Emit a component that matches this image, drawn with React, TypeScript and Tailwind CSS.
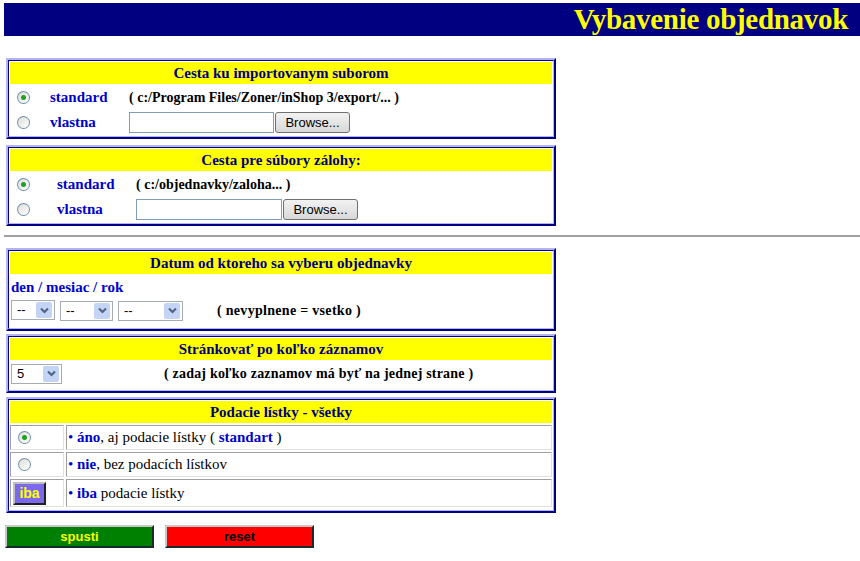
import React from "react";

const SANS = "font-['Liberation_Sans',Arial,sans-serif]";

function Radio({ checked = false }: { checked?: boolean }) {
  return (
    <span className="inline-flex h-[13px] w-[13px] items-center justify-center rounded-full border border-[#1c5180]/60 bg-gradient-to-br from-[#dcdcd7] to-white">
      {checked && <span className="h-[5px] w-[5px] rounded-full bg-[#21a121]" />}
    </span>
  );
}

function Browse() {
  return (
    <span className={`inline-flex h-[21px] w-[75px] items-center justify-center rounded-[3px] border border-[#707070] bg-gradient-to-b from-[#f2f2f2] to-[#d8d8d8] text-[13px] font-normal text-black ${SANS}`}>
      Browse...
    </span>
  );
}

function Select({ value, width }: { value: string; width: string }) {
  return (
    <span className={`inline-flex h-[20px] ${width} items-center justify-between border border-[#a5acb5] bg-white pl-[5px] pr-[2px] text-[13px] text-black ${SANS}`}>
      <span>{value}</span>
      <span className="flex h-[16px] w-[16px] items-center justify-center rounded-[2px] bg-[#c4d4f5]">
        <svg width="9" height="7" viewBox="0 0 9 7">
          <path d="M1 1.5 L4.5 5 L8 1.5" fill="none" stroke="#4d6185" strokeWidth="2" />
        </svg>
      </span>
    </span>
  );
}

function Box({ title, children }: { title: string; children: React.ReactNode }) {
  return (
    <div className="w-[550px] border-2 border-t-[#b4b4f0] border-l-[#b4b4f0] border-b-[#000080] border-r-[#000080]">
      <div className="border border-t-[#000080] border-l-[#000080] border-b-[#b4b4f0] border-r-[#b4b4f0] p-[1px]">
        <div className="flex h-[22px] items-center justify-center bg-[#ffff00] text-[15px] font-bold text-[#000080]">
          {title}
        </div>
        {children}
      </div>
    </div>
  );
}

function FileRow({ checked, label, children, labelW }: { checked?: boolean; label: string; children: React.ReactNode; labelW: string }) {
  return (
    <div className="flex h-[25px] items-center">
      <div className="flex w-[40px] pl-[7px]">
        <Radio checked={checked} />
      </div>
      <div className={`${labelW} text-[15px] font-bold text-[#0000cc]`}>{label}</div>
      <div className="flex items-center text-[14px] font-bold text-black">{children}</div>
    </div>
  );
}

function Cell({ children, className = "" }: { children: React.ReactNode; className?: string }) {
  return <div className={`flex items-center border border-[#a0a0a0] border-b-[#e0e0e0] border-r-[#e0e0e0] ${className}`}>{children}</div>;
}

export default function App() {
  return (
    <div className="min-h-screen w-full bg-white pl-[4px] pt-[3px] font-['Liberation_Serif','Times_New_Roman',serif]">
      <header className="flex h-[33px] items-center justify-end bg-[#000080] pr-[12px]">
        <h1 className="text-[29px] font-bold leading-none tracking-[-0.3px] text-[#ffff00]">Vybavenie objednavok</h1>
      </header>

      <div className="ml-[2px] mt-[22px] flex flex-col gap-[6px]">
        <Box title="Cesta ku importovanym suborom">
          <div className="pt-[1px]">
            <FileRow checked label="standard" labelW="w-[79px]">
              ( c:/Program Files/Zoner/inShop 3/export/... )
            </FileRow>
            <FileRow label="vlastna" labelW="w-[79px]">
              <span className="h-[21px] w-[145px] border border-[#7f9db9] bg-white" />
              <span className="ml-[1px]"><Browse /></span>
            </FileRow>
          </div>
        </Box>

        <Box title="Cesta pre súbory zálohy:">
          <div className="pt-[1px]">
            <FileRow checked label="standard" labelW="w-[86px] pl-[7px]">
              ( c:/objednavky/zaloha... )
            </FileRow>
            <FileRow label="vlastna" labelW="w-[86px] pl-[7px]">
              <span className="h-[21px] w-[146px] border border-[#7f9db9] bg-white" />
              <span className="ml-[1px]"><Browse /></span>
            </FileRow>
          </div>
        </Box>
      </div>

      <hr className="mt-[9px] border-0 border-t-2 border-t-[#a0a0a0]" />

      <div className="ml-[2px] mt-[11px] flex flex-col gap-[3px]">
        <Box title="Datum od ktoreho sa vyberu objednavky">
          <div className="px-[1px] pb-[5px] pt-[2px]">
            <div className="h-[22px] text-[15px] font-bold leading-[22px] text-[#0000cc]">den / mesiac / rok</div>
            <div className="flex items-center">
              <Select value="--" width="w-[44px]" />
              <span className="ml-[5px]"><Select value="--" width="w-[53px]" /></span>
              <span className="ml-[5px]"><Select value="--" width="w-[65px]" /></span>
              <span className="ml-[34px] text-[14px] font-bold tracking-[0.3px]">( nevyplnene = vsetko )</span>
            </div>
          </div>
        </Box>

        <Box title="Stránkovať po koľko záznamov">
          <div className="flex items-center px-[1px] pb-[5px] pt-[3px]">
            <Select value="5" width="w-[51px]" />
            <span className="ml-[102px] text-[14px] font-bold tracking-[0.2px]">( zadaj koľko zaznamov má byť na jednej strane )</span>
          </div>
        </Box>

        <div className="mt-[1px]">
          <Box title="Podacie lístky - všetky">
            <div className="flex flex-col gap-[2px] pb-[2px] pt-[2px] text-[15px]">
              {[
                { icon: <Radio checked />, text: <><b className="text-[#0000cc]">áno</b>, aj podacie lístky ( <b className="text-[#0000cc]">standart</b> )</>, h: "h-[25px]" },
                { icon: <Radio />, text: <><b className="text-[#0000cc]">nie</b>, bez podacích lístkov</>, h: "h-[25px]" },
                {
                  icon: (
                    <span className={`flex h-[23px] w-[33px] items-center justify-center border-2 border-t-[#c0c0c0] border-l-[#c0c0c0] border-b-[#202020] border-r-[#202020] bg-[#7b68ee] text-[14px] font-bold text-[#ffff00] ${SANS}`}>
                      iba
                    </span>
                  ),
                  text: <><b className="text-[#0000cc]">iba</b> podacie lístky</>,
                  h: "h-[28px]",
                },
              ].map((r, i) => (
                <div key={i} className={`flex ${r.h} gap-[2px]`}>
                  <Cell className={i === 2 ? "w-[54px] justify-start pl-[2px]" : "w-[54px] justify-start pl-[7px]"}>{r.icon}</Cell>
                  <Cell className="flex-1 pl-[1px] text-black">
                    <span className="text-[#0000cc]">•&nbsp;</span>
                    <span>{r.text}</span>
                  </Cell>
                </div>
              ))}
            </div>
          </Box>
        </div>
      </div>

      <div className={`mt-[12px] flex gap-[11px] ${SANS}`}>
        <span className="ml-[1px] flex h-[23px] w-[149px] items-center justify-center border-2 border-t-[#c8c8c8] border-l-[#c8c8c8] border-b-[#1a2a2a] border-r-[#1a2a2a] bg-[#008000] text-[13px] font-bold text-[#ffff00]">
          spusti
        </span>
        <span className="flex h-[23px] w-[149px] items-center justify-center border-2 border-t-[#c8c8c8] border-l-[#c8c8c8] border-b-[#1a2a2a] border-r-[#1a2a2a] bg-[#ff0000] text-[13px] font-bold text-black">
          reset
        </span>
      </div>
    </div>
  );
}
